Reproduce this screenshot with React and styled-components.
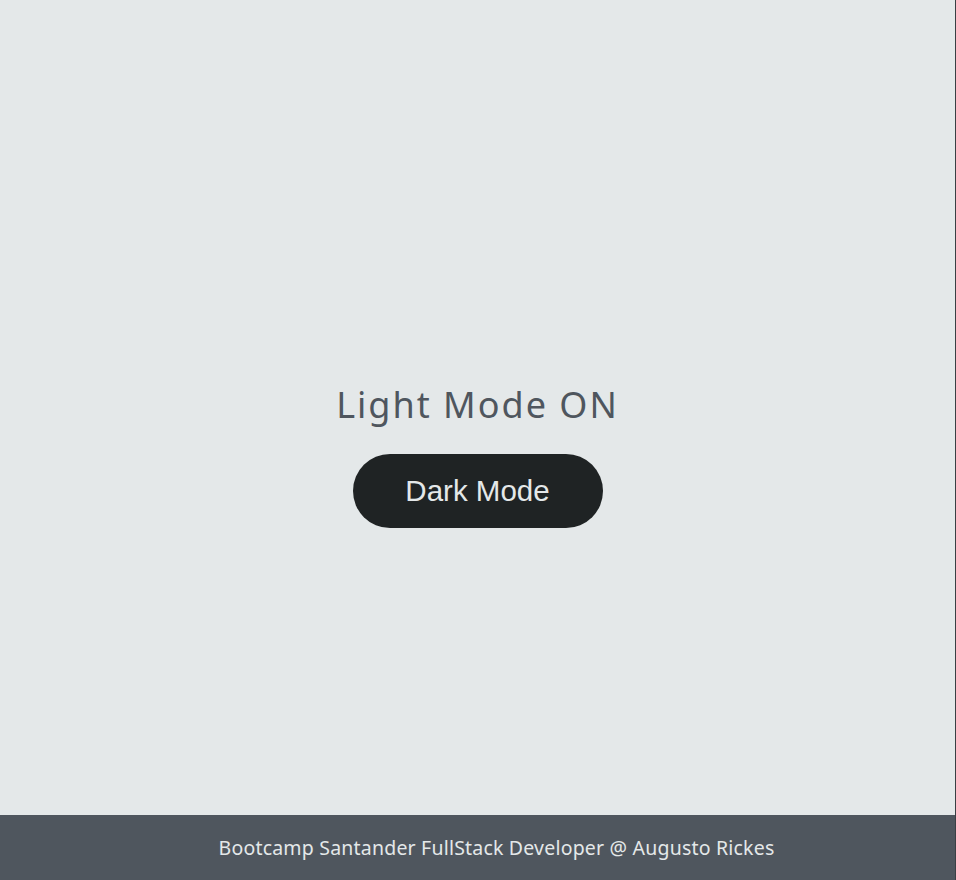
import { useState } from 'react'
import styled, { createGlobalStyle } from 'styled-components'

const GlobalStyle = createGlobalStyle`
  * {
    box-sizing: border-box;
  }
  body {
    margin: 0;
    font-family: 'Noto Sans', 'Lato', sans-serif;
  }
`

const Page = styled.div`
  min-height: 100vh;
  display: flex;
  flex-direction: column;
  background-color: ${props => props.dark ? '#1f2324' : '#e4e8e9'};
  border-right: 1px solid #3a3f44;
`

const Main = styled.main`
  flex: 1;
  display: flex;
  flex-direction: column;
  align-items: center;
  justify-content: center;
  padding-top: 96px;
`

const Title = styled.h1`
  margin: 0 0 27px;
  font-size: 36px;
  font-weight: 400;
  line-height: 1.2;
  letter-spacing: 2px;
  color: ${props => props.dark ? '#e4e8e9' : '#4f565e'};
`

const ToggleButton = styled.button`
  width: 250px;
  height: 74px;
  border: none;
  border-radius: 37px;
  background-color: ${props => props.dark ? '#e4e8e9' : '#1f2324'};
  color: ${props => props.dark ? '#1f2324' : '#e4e8e9'};
  font-family: 'Liberation Sans', Arial, sans-serif;
  font-size: 29.5px;
  cursor: pointer;
`

const Footer = styled.footer`
  height: 65px;
  display: flex;
  align-items: center;
  justify-content: center;
  padding-left: 38px;
  background-color: #4f565e;
  color: #e4e8e9;
  font-size: 19.5px;
  letter-spacing: 0.2px;
`

const App = () => {
  const [dark, setDark] = useState(false)

  return (
    <>
      <GlobalStyle />
      <Page dark={dark}>
        <Main>
          <Title dark={dark}>{dark ? 'Dark Mode ON' : 'Light Mode ON'}</Title>
          <ToggleButton dark={dark} onClick={() => setDark(d => !d)}>
            {dark ? 'Light Mode' : 'Dark Mode'}
          </ToggleButton>
        </Main>
        <Footer>Bootcamp Santander FullStack Developer @ Augusto Rickes</Footer>
      </Page>
    </>
  )
}

export default App
